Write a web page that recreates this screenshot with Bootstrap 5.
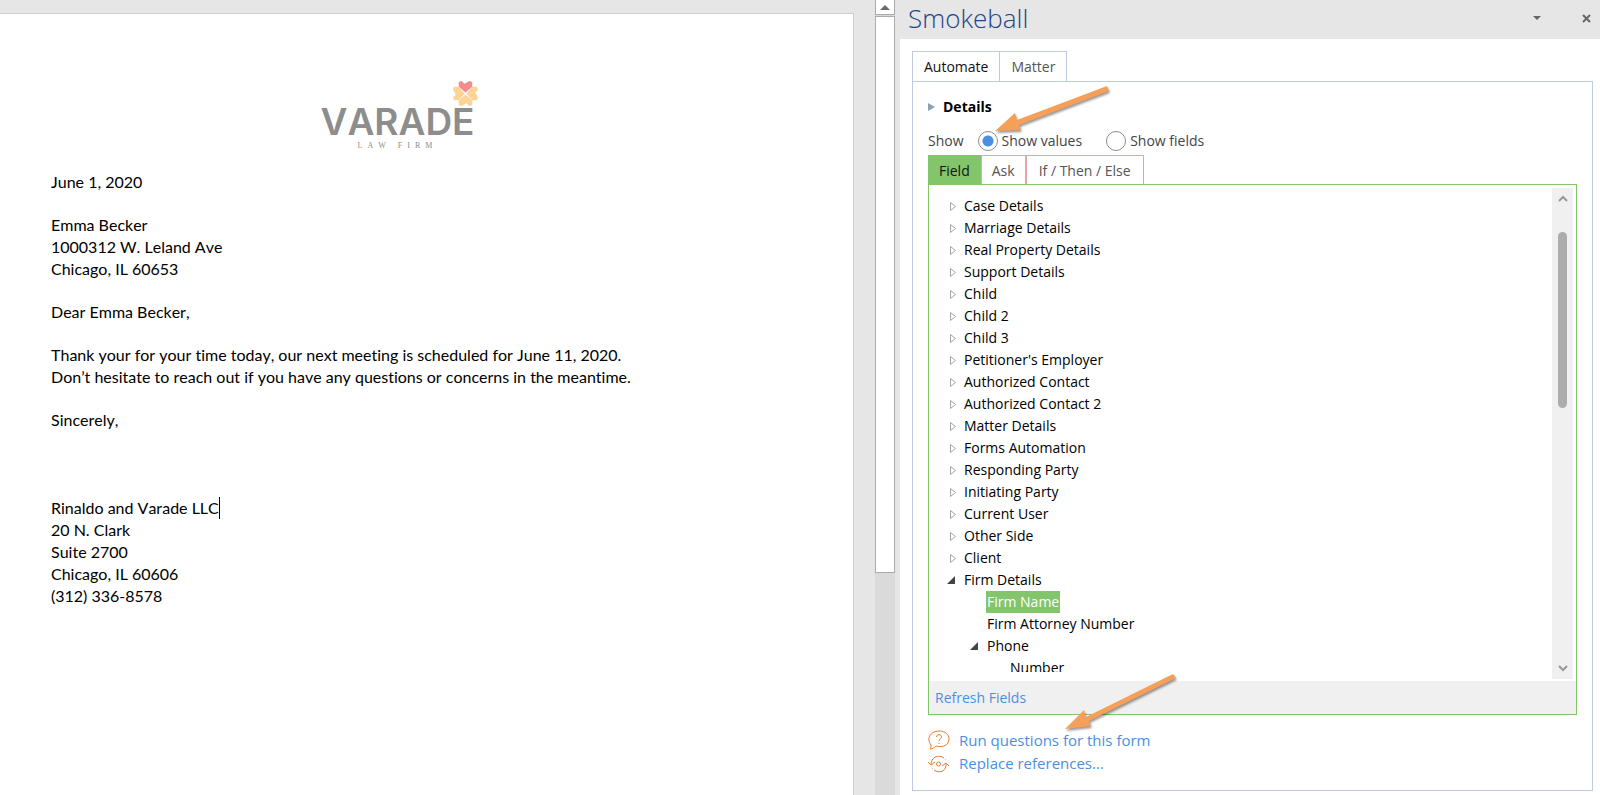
<!DOCTYPE html>
<html lang="en">
<head>
<meta charset="utf-8">
<meta name="viewport" content="width=device-width, initial-scale=1">
<title>Smokeball</title>
<link href="https://cdn.jsdelivr.net/npm/bootstrap@5.3.0/dist/css/bootstrap.min.css" rel="stylesheet">
<style>
  :root { --ui: "Open Sans", "Noto Sans", sans-serif; --green: #82c56b; --blue: #4a90e2; --frame: #bccbe2; }
  body { font-family: var(--ui); font-size: 14px; line-height: 22px; color: #111; background: #e6e6e6; }
  button { font: inherit; }

  /* document side */
  .doc-page { margin-top: 13px; padding: 64px 109px 0 51px; background: #fff; border: 1px solid #cfcfcf; border-width: 1px 1px 0 0; font-family: Lato, sans-serif; font-size: 16px; font-variant-ligatures: none; font-kerning: none; color: #000; }
  .doc-page p { margin-bottom: 21px; }
  .doc-page .sign-off { margin-bottom: 66px; }
  .brand { width: 154px; height: 93px; padding-top: 25px; color: #8d8d8d; }
  .brand-name { font-family: Inter, sans-serif; font-weight: 600; font-size: 37px; line-height: 38px; }
  .brand-sub { font-family: "Liberation Serif", serif; font-size: 8px; line-height: 10px; letter-spacing: 5px; }
  .brand-flower { top: 2px; right: -4px; }
  .caret { width: 1px; height: 22px; background: #000; }
  .gutter { width: 21px; }
  .doc-scroll { width: 20px; background: #dadada; }
  .doc-scroll button { height: 15px; border: 1px solid #ababab; border-width: 0 1px 1px; background: #fff; }
  .doc-thumb { height: 70%; margin-top: 1px; border: 1px solid #ababab; background: #fff; }

  /* task pane */
  .task-pane { flex: 0 0 44%; padding-left: 4px; margin-left: 1px; }
  .pane-head { height: 39px; padding: 0 8px 3px; }
  .pane-title { font-size: 26px; line-height: 36px; font-weight: 300; color: #1c4587; }
  .pane-body { padding: 12px 7px 4px 12px; }
  .icon-btn { border: 0; background: none; padding: 0; line-height: 0; }
  .head-btns { gap: 40px; }
  .main-tabs button { height: 31px; border: 1px solid var(--frame); background: #fff; color: #555; padding: 0 11px; margin-bottom: -1px; }
  .main-tabs button + button { margin-left: -1px; }
  .main-tabs button.active { border-bottom-color: #fff; color: #111; }
  .pane-frame { border: 1px solid var(--frame); padding: 14px 15px 15px; }
  .show-row { color: #444; height: 22px; margin: 12px 0 3px; }
  .show-row .show-label { margin-right: 14px; }
  .show-row input { appearance: none; width: 20px; height: 20px; margin: 0; border: 1px solid #8c8c8c; border-radius: 50%; background: #fff; }
  .show-row input:checked { background: radial-gradient(circle, var(--blue) 5px, #fff 6px); }
  .field-tabs button { height: 30px; border: 1px solid; background: #fff; color: #555; padding: 2px 10px 0; }
  .field-tabs .t-field { background: var(--green); border-color: var(--green); color: #111; }
  .field-tabs .t-ask { border-color: #9cc3f0; }
  .field-tabs .t-if { border-color: #e5a3a3; padding: 2px 12px 0; }
  .field-box { border: 1px solid var(--green); margin-top: -1px; }
  .tree-view { height: 0; }
  .tree { color: #000; padding: 10px 0 0 18px; margin-bottom: 9px; }
  .tree ul { padding-left: 23px; }
  .twisty { width: 11px; height: 22px; display: inline-flex; align-items: center; margin-right: 6px; }
  .tree .leaf { margin-left: 17px; }
  .picked { background: var(--green); color: #fff; display: inline-block; padding: 0 1px; margin-left: -1px; }
  .tree-scroll { width: 21px; background: #f0f0f0; margin: 3px 3px 2px 0; padding: 7px 0; }
  .tree-thumb { width: 9px; height: 37%; margin-top: 30px; border-radius: 5px; background: #adadad; }
  .box-foot { height: 33px; background: #f0f0f0; padding: 0 6px; }
  a { color: var(--blue); text-decoration: none; }
  .actions { margin-top: 14px; font-size: 15px; line-height: 23px; }
  .actions svg { flex: none; }
  .arrow-top { left: 62px; top: -48px; pointer-events: none; }
  .arrow-run { left: 134px; top: -58px; pointer-events: none; }
</style>
</head>
<body>
<div class="d-flex vh-100 overflow-hidden">

  <main class="d-flex flex-grow-1">
    <article class="doc-page flex-grow-1">
      <header class="brand position-relative mx-auto d-flex flex-column align-items-center">
        <div class="brand-name">VARADE</div>
        <div class="brand-sub">LAW FIRM</div>
        <svg class="brand-flower position-absolute" width="27" height="27" viewBox="-14 -14 28 28">
          <g fill="#fdd496">
            <path d="M0-1-7-7V-12L-4-13-1-10 4-13 7-12V-7Z" fill="#f58a8e"/>
            <path d="M0-1-7-7V-12L-4-13-1-10 4-13 7-12V-7Z" transform="rotate(90)"/>
            <path d="M0-1-7-7V-12L-4-13-1-10 4-13 7-12V-7Z" transform="rotate(180)"/>
            <path d="M0-1-7-7V-12L-4-13-1-10 4-13 7-12V-7Z" transform="rotate(270)"/>
          </g>
        </svg>
      </header>
      <p>June 1, 2020</p>
      <p>Emma Becker<br>1000312 W. Leland Ave<br>Chicago, IL 60653</p>
      <p>Dear Emma Becker,</p>
      <p>Thank your for your time today, our next meeting is scheduled for June 11, 2020.<br>Don’t hesitate to reach out if you have any questions or concerns in the meantime.</p>
      <p class="sign-off">Sincerely,</p>
      <p><span class="d-inline-flex align-top">Rinaldo and Varade LLC<span class="caret"></span></span><br>20 N. Clark<br>Suite 2700<br>Chicago, IL 60606<br>(312) 336-8578</p>
    </article>
    <div class="gutter"></div>
    <div class="doc-scroll d-flex flex-column">
      <button type="button" class="d-flex justify-content-center align-items-center p-0" aria-label="Scroll up"><svg width="10" height="5" viewBox="0 0 10 5"><path d="M0 5 5 0l5 5Z" fill="#6b6b6b"/></svg></button>
      <div class="doc-thumb"></div>
    </div>
  </main>

  <aside class="task-pane d-flex flex-column">
    <header class="pane-head d-flex align-items-center">
      <h1 class="pane-title mb-0 me-auto">Smokeball</h1>
      <div class="head-btns d-flex align-items-center">
        <button type="button" class="icon-btn" aria-label="Pane options"><svg width="8" height="4" viewBox="0 0 8 4"><path d="M0 0h8L4 4Z" fill="#666"/></svg></button>
        <button type="button" class="icon-btn" aria-label="Close"><svg width="11" height="9" viewBox="0 0 11 9"><path d="m2 1 7 7M9 1 2 8" stroke="#666" stroke-width="2"/></svg></button>
      </div>
    </header>
    <div class="pane-body bg-white flex-grow-1 d-flex flex-column">
      <div class="main-tabs d-flex" role="tablist">
        <button type="button" role="tab" class="active">Automate</button>
        <button type="button" role="tab">Matter</button>
      </div>
      <section class="pane-frame flex-grow-1 d-flex flex-column">
        <div class="d-flex align-items-center gap-2 fw-bold text-black"><svg width="7" height="8" viewBox="0 0 7 8"><path d="M0 0 7 4 0 8Z" fill="#8aa2b4"/></svg>Details</div>
        <div class="show-row d-flex align-items-center position-relative">
          <span class="show-label">Show</span>
          <input type="radio" name="show" id="values" checked><label for="values" class="ms-1 me-4">Show values</label>
          <input type="radio" name="show" id="fields"><label for="fields" class="ms-1">Show fields</label>
          <svg class="arrow-top position-absolute" width="126" height="60" viewBox="0 0 126 60">
            <path d="M5 49 25 31 27 38 117 4 119 9 29 43 31 48Z" fill="#f59f58" filter="drop-shadow(1px 2px 1px #0006)"/>
          </svg>
        </div>
        <div class="field-tabs d-flex" role="tablist">
          <button type="button" role="tab" class="t-field">Field</button>
          <button type="button" role="tab" class="t-ask">Ask</button>
          <button type="button" role="tab" class="t-if">If / Then / Else</button>
        </div>
        <div class="field-box flex-grow-1 d-flex flex-column">
          <div class="tree-view d-flex flex-grow-1 overflow-hidden">
            <ul class="tree list-unstyled flex-grow-1 overflow-hidden" id="tree"></ul>
            <div class="tree-scroll d-flex flex-column align-items-center">
              <button type="button" class="icon-btn" aria-label="Scroll up"><svg width="10" height="7" viewBox="0 0 10 7"><path d="m1 6 4-4 4 4" fill="none" stroke="#999" stroke-width="2"/></svg></button>
              <div class="tree-thumb"></div>
              <button type="button" class="icon-btn mt-auto" aria-label="Scroll down"><svg width="10" height="7" viewBox="0 0 10 7"><path d="m1 1 4 4 4-4" fill="none" stroke="#999" stroke-width="2"/></svg></button>
            </div>
          </div>
          <div class="box-foot d-flex align-items-center"><a href="#">Refresh Fields</a></div>
        </div>
        <div class="actions position-relative">
          <a href="#" class="d-flex align-items-center">
            <svg class="me-2" width="23" height="21" viewBox="0 0 23 21" fill="none" stroke="#f07a30"><path d="M3 15C-2 9 2 1 11 1c7 0 10 4 10 8 0 6-6 9-13 7-2 2-4 3-6 3 1-1 1-2 1-4Z"/><path d="M8.500 7c0-3 5-3 5 0 0 2-2.500 2-2.500 4m0 1.500V14"/></svg>Run questions for this form</a>
          <a href="#" class="d-flex align-items-center">
            <svg class="me-2" width="23" height="18" viewBox="0 0 23 18" fill="none" stroke="#f07a30"><path d="M16 3C10-1 3 2 3 10M0 7l3 3 4-3M6 15c6 4 13 1 12-7m-4 3 4-3 3 3M17.500 4.500l.5.5M4 13l.5.500"/><circle cx="10.500" cy="9" r="2"/></svg>Replace references...</a>
          <svg class="arrow-run position-absolute" width="120" height="66" viewBox="0 0 120 66">
            <path d="M3 58 22 39 24 46 111 3 114 7 27 50 29 55Z" fill="#f59f58" filter="drop-shadow(1px 2px 1px #0006)"/>
          </svg>
        </div>
      </section>
    </div>
  </aside>
</div>

<script>
  const closed = '<span class="twisty justify-content-center"><svg width="6" height="9" viewBox="0 0 6 9"><path d="M.5.500 5.500 4.500l-5 4Z" fill="#fff" stroke="#a6a6a6"/></svg></span>';
  const open = '<span class="twisty"><svg width="8" height="8" viewBox="0 0 8 8"><path d="M0 8 8 0v8Z" fill="#444"/></svg></span>';
  const groups = ["Case Details", "Marriage Details", "Real Property Details", "Support Details", "Child", "Child 2", "Child 3",
    "Petitioner's Employer", "Authorized Contact", "Authorized Contact 2", "Matter Details", "Forms Automation",
    "Responding Party", "Initiating Party", "Current User", "Other Side", "Client"];
  document.getElementById("tree").innerHTML =
    groups.map(g => `<li class="d-flex">${closed}${g}</li>`).join("") +
    `<li><div class="d-flex">${open}Firm Details</div>
      <ul class="list-unstyled">
        <li class="d-flex"><span class="leaf"><span class="picked">Firm Name</span></span></li>
        <li><span class="leaf">Firm Attorney Number</span></li>
        <li><div class="d-flex">${open}Phone</div><ul class="list-unstyled"><li><span class="leaf">Number</span></li></ul></li>
      </ul></li>`;
</script>
<script src="https://cdn.jsdelivr.net/npm/bootstrap@5.3.0/dist/js/bootstrap.bundle.min.js"></script>
</body>
</html>
